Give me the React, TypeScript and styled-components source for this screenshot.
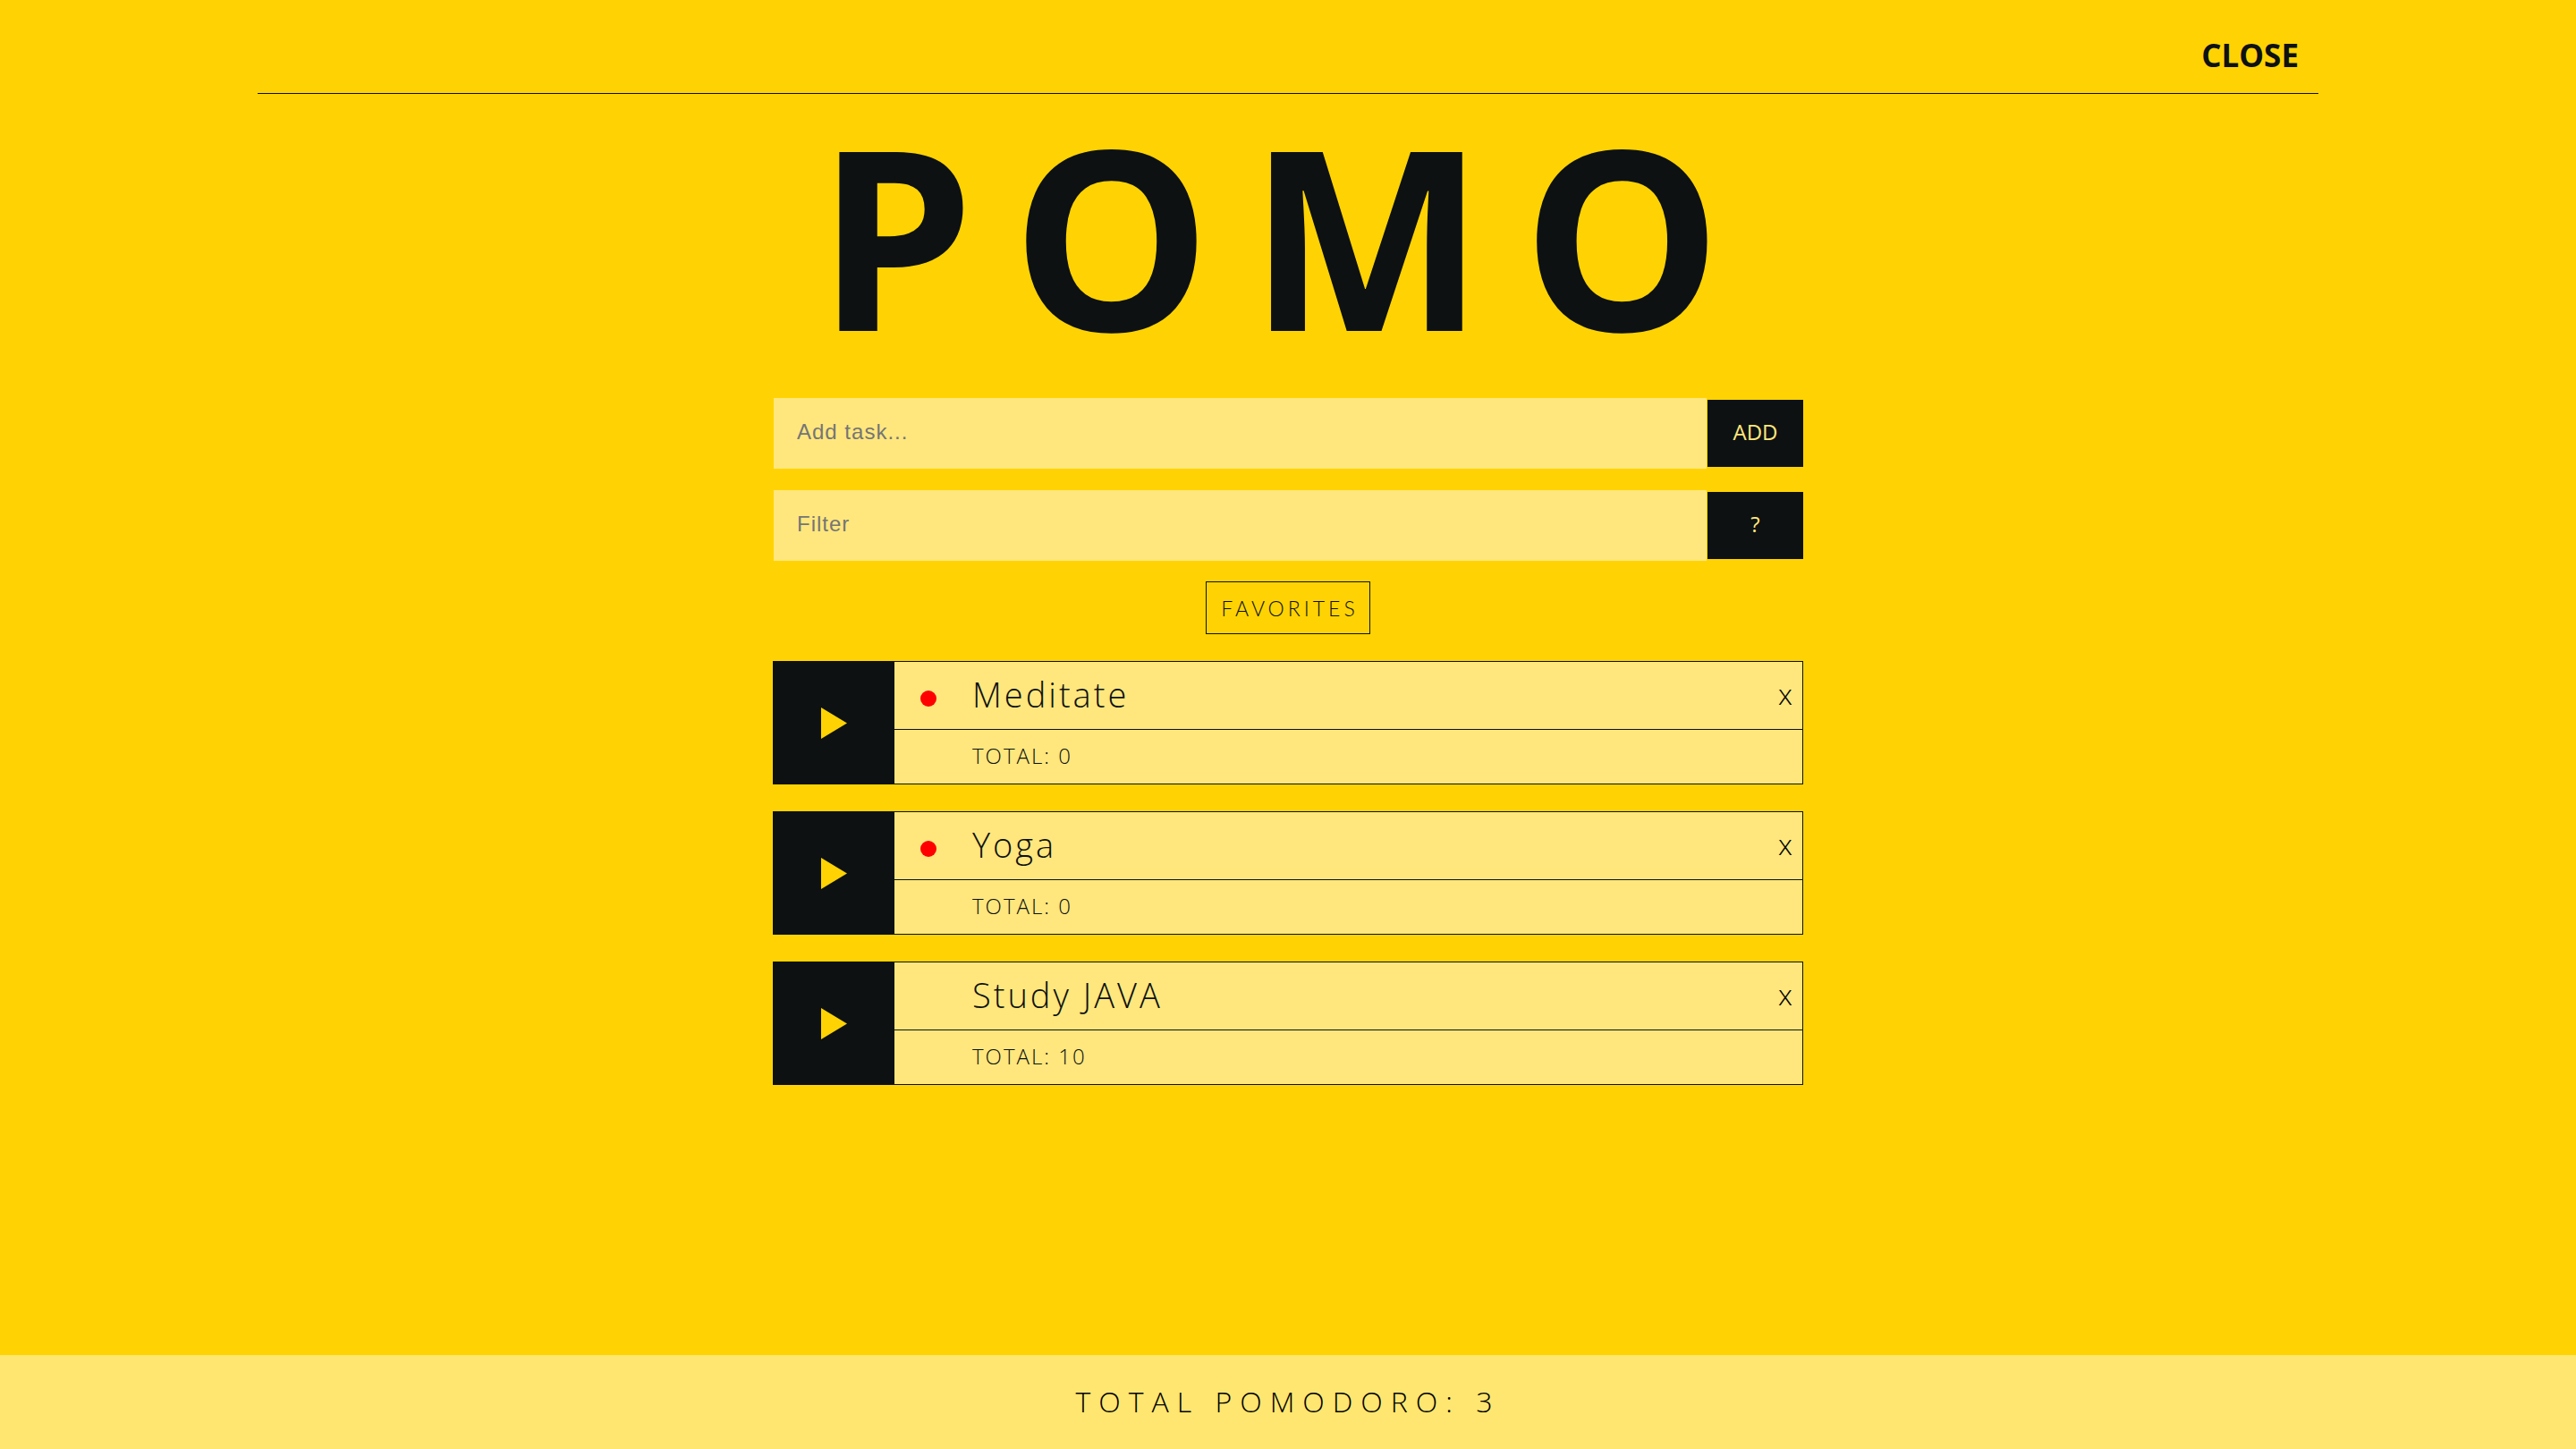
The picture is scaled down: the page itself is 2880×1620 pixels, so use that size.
import React, { useState } from "react";
import styled, { createGlobalStyle } from "styled-components";

const ink = "#0d1112";
const yellow = "#ffd303";
const cream = "#ffe77d";
const sans = `"Open Sans", "Noto Sans", sans-serif`;

const GlobalStyle = createGlobalStyle`
  *, *::before, *::after { box-sizing: border-box; }
  body { margin: 0; background: ${yellow}; color: ${ink}; font-family: ${sans}; }
  button, input { margin: 0; border: 0; border-radius: 0; }
  button { cursor: pointer; }
`;

const Page = styled.div`
  min-height: 100vh;
  display: flex;
  flex-direction: column;
  align-items: center;
`;

const Header = styled.header`
  width: 80%;
  padding: 20px 22px 0 0;
  display: flex;
  justify-content: flex-end;
  border-bottom: 1px solid ${ink};
`;

const CloseButton = styled.button`
  padding: 0;
  background: transparent;
  color: ${ink};
  font: 700 35px/84px ${sans};
`;

const Main = styled.main`
  flex: 1;
  width: 40%;
  display: flex;
  flex-direction: column;
  align-items: center;
`;

const Title = styled.h1`
  margin: 0 0 26px;
  font-size: 280px;
  font-weight: 700;
  line-height: 313px;
  letter-spacing: 42px;
  white-space: nowrap;
`;

const Fields = styled.div`
  width: 100%;
  display: grid;
  gap: 22px;
`;

const FieldRow = styled.form`
  display: flex;
  align-items: center;
`;

const TextField = styled.input`
  flex: 1;
  min-width: 0;
  height: 81px;
  padding: 0 26px 4px;
  border: 1px solid ${yellow};
  background: ${cream};
  color: ${ink};
  font: 24px "Liberation Sans", Arial, sans-serif;
  letter-spacing: 1px;
  &::placeholder { color: #757575; }
`;

const FieldButton = styled.button`
  width: 107px;
  height: 75px;
  padding: 0 0 4px;
  background: ${ink};
  color: ${cream};
  font: 400 24px ${sans};
`;

const FavoritesButton = styled.button`
  height: 59px;
  margin: 22px 0 30px;
  padding: 0 12px 0 16px;
  border: 1px solid ${ink};
  background: transparent;
  color: ${ink};
  font: 300 23px Lato, sans-serif;
  letter-spacing: 4px;
`;

const TaskList = styled.ul`
  width: 100%;
  margin: 0;
  padding: 0;
  list-style: none;
  display: grid;
  gap: 30px;
`;

const Task = styled.li`
  height: 138px;
  display: flex;
  border: 1px solid ${ink};
  background: ${cream};
`;

const PlayButton = styled.button`
  width: 135px;
  padding: 0;
  display: grid;
  place-items: center;
  background: ${ink};
`;

const TaskBody = styled.div`
  flex: 1;
  display: grid;
  grid-template-rows: 76px 1fr;
`;

const TaskTop = styled.div`
  padding: 0 6px 0 29px;
  display: flex;
  align-items: center;
  border-bottom: 1px solid ${ink};
`;

const Dot = styled.span<{ $on: boolean }>`
  width: 18px;
  height: 18px;
  margin: 6px 40px 0 0;
  border-radius: 50%;
  background: ${(p) => (p.$on ? "#ff0000" : "transparent")};
`;

const TaskName = styled.h2`
  flex: 1;
  margin: 0;
  padding-bottom: 3px;
  font-size: 38px;
  font-weight: 300;
  letter-spacing: 3px;
`;

const RemoveButton = styled.button`
  padding: 0 5px 4px;
  background: transparent;
  color: #000;
  font: 300 32px ${sans};
`;

const TaskTotal = styled.p`
  margin: 0;
  padding-left: 87px;
  font-size: 24px;
  font-weight: 300;
  line-height: 58px;
  letter-spacing: 2px;
`;

const Footer = styled.footer`
  width: 100%;
  height: 105px;
  background: #ffe670;
  color: #000;
  font-size: 32px;
  font-weight: 300;
  line-height: 103px;
  letter-spacing: 9px;
  text-align: center;
`;

const initialTasks = [
  { name: "Meditate", total: 0, favorite: true },
  { name: "Yoga", total: 0, favorite: true },
  { name: "Study JAVA", total: 10, favorite: false },
];

export default function App() {
  const [tasks, setTasks] = useState(initialTasks);
  return (
    <Page>
      <GlobalStyle />
      <Header>
        <CloseButton type="button">CLOSE</CloseButton>
      </Header>
      <Main>
        <Title>POMO</Title>
        <Fields>
          <FieldRow onSubmit={(e) => e.preventDefault()}>
            <TextField aria-label="Add task" placeholder="Add task..." />
            <FieldButton type="submit">ADD</FieldButton>
          </FieldRow>
          <FieldRow onSubmit={(e) => e.preventDefault()}>
            <TextField aria-label="Filter" placeholder="Filter" />
            <FieldButton type="submit">?</FieldButton>
          </FieldRow>
        </Fields>
        <FavoritesButton type="button">FAVORITES</FavoritesButton>
        <TaskList>
          {tasks.map((task) => (
            <Task key={task.name}>
              <PlayButton type="button" aria-label={`Start ${task.name}`}>
                <svg width="29" height="35" viewBox="0 0 29 35" aria-hidden="true">
                  <path d="M0 0L29 17.5L0 35Z" fill={yellow} />
                </svg>
              </PlayButton>
              <TaskBody>
                <TaskTop>
                  <Dot $on={task.favorite} />
                  <TaskName>{task.name}</TaskName>
                  <RemoveButton
                    type="button"
                    aria-label={`Remove ${task.name}`}
                    onClick={() => setTasks(tasks.filter((t) => t !== task))}
                  >
                    x
                  </RemoveButton>
                </TaskTop>
                <TaskTotal>TOTAL: {task.total}</TaskTotal>
              </TaskBody>
            </Task>
          ))}
        </TaskList>
      </Main>
      <Footer>TOTAL POMODORO: 3</Footer>
    </Page>
  );
}
